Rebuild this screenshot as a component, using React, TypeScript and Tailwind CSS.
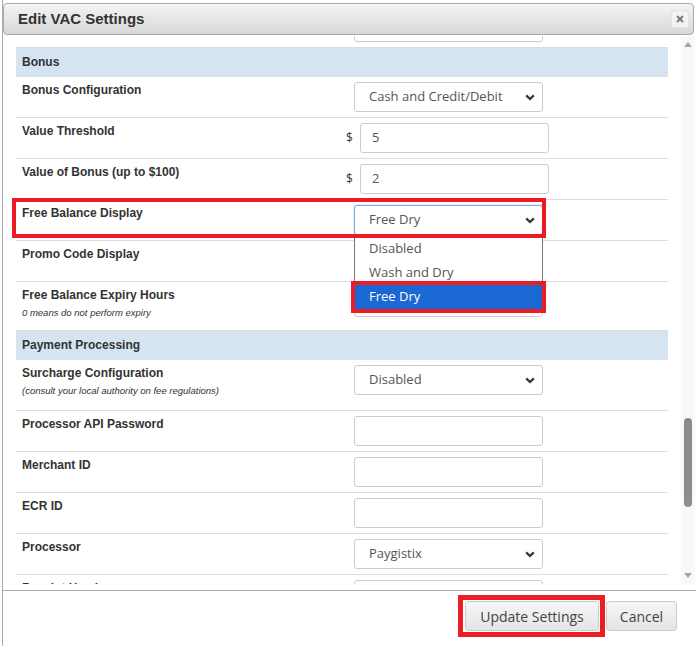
import { X } from 'lucide-react';

const LABEL_FONT = { fontFamily: '"Liberation Sans", Arial, sans-serif' };

function Chevron() {
  return (
    <svg width="10" height="7" viewBox="0 0 10 7" className="shrink-0">
      <path d="M1.2 1.4 L5 5 L8.8 1.4" fill="none" stroke="#333" strokeWidth="2.2" />
    </svg>
  );
}

function FakeSelect({ value, focused }: { value: string; focused?: boolean }) {
  return (
    <div
      className={
        'w-[189px] h-[30px] rounded-[3px] border bg-white flex items-center justify-between pl-[14px] pr-[7px] text-[13px] text-[#555] ' +
        (focused ? 'border-[#7aaee0] shadow-[0_0_2px_#9cc3ea]' : 'border-[#ccc]')
      }
    >
      <span>{value}</span>
      <Chevron />
    </div>
  );
}

function TextBox({ value = '' }: { value?: string }) {
  return (
    <div className="w-[189px] h-[30px] rounded-[3px] border border-[#ccc] bg-white flex items-center pl-[11px] text-[13px] text-[#555]">
      {value}
    </div>
  );
}

function Row({
  label,
  note,
  h = 'h-[41px]',
  children,
}: {
  label: string;
  note?: string;
  h?: string;
  children?: React.ReactNode;
}) {
  return (
    <div className={`relative flex ${h} border-b border-[#ddd] shrink-0`}>
      <div className="w-[330px] pl-[6px] pt-[5px]" style={LABEL_FONT}>
        <div className="text-[12px] font-bold text-[#333] leading-[16px]">{label}</div>
        {note && <div className="text-[9.5px] italic text-[#333] mt-[4px] leading-[12px]">{note}</div>}
      </div>
      <div className="flex-1 pt-[5px]">{children}</div>
    </div>
  );
}

function Section({ title }: { title: string }) {
  return (
    <div
      className="h-[29px] bg-[#d6e3f0] pl-[6px] pb-[1px] flex items-center text-[12px] font-bold text-[#333] shrink-0"
      style={LABEL_FONT}
    >
      {title}
    </div>
  );
}

function Dollar({ value }: { value: string }) {
  return (
    <div className="flex items-center">
      <span className="w-[14px] text-[12px] text-[#333]">$</span>
      <TextBox value={value} />
    </div>
  );
}

function Field({ children }: { children: React.ReactNode }) {
  return <div className="pl-[8px]">{children}</div>;
}

export default function App() {
  return (
    <div className="w-[696px] h-[646px] bg-white overflow-hidden" style={{ fontFamily: '"Open Sans", sans-serif' }}>
      <div className="ml-[2px] h-full border-l border-[#aaa] flex flex-col pt-[3px]">
        {/* Title bar */}
        <div className="mr-[2px] h-[32px] shrink-0 rounded-[4px] border border-[#aaa] bg-gradient-to-b from-[#f4f4f4] to-[#d8d8d8] flex items-center justify-between pl-[14px] pr-[4px]">
          <span className="text-[15px] font-bold text-[#333]" style={LABEL_FONT}>
            Edit VAC Settings
          </span>
          <div className="w-[18px] h-[18px] rounded-[3px] bg-[#f3f3f3] border border-[#e2e2e2] flex items-center justify-center">
            <X size={10} strokeWidth={4.5} color="#7a7a7a" />
          </div>
        </div>

        {/* Scrollable body */}
        <div className="flex-1 flex min-h-0 mt-[1px] mb-[6px]">
          <div className="flex-1 overflow-hidden pl-[13px] pr-[13px]">
            <div className="w-[652px] flex flex-col -mt-[29px]">
              <Row label="">
                <Field>
                  <TextBox />
                </Field>
              </Row>
              <Section title="Bonus" />
              <Row label="Bonus Configuration">
                <Field>
                  <FakeSelect value="Cash and Credit/Debit" />
                </Field>
              </Row>
              <Row label="Value Threshold">
                <Dollar value="5" />
              </Row>
              <Row label="Value of Bonus (up to $100)">
                <Dollar value="2" />
              </Row>
              <Row label="Free Balance Display">
                <div className="pl-[8px] relative">
                  <FakeSelect value="Free Dry" focused />
                  {/* open dropdown list */}
                  <div className="absolute left-[8px] top-[30px] w-[189px] z-10 bg-white border border-[#767676] text-[13px] text-[#555] py-[1px]">
                    <div className="h-[24px] pl-[14px] flex items-center">Disabled</div>
                    <div className="h-[24px] pl-[14px] flex items-center">Wash and Dry</div>
                    <div className="relative h-[24px] pl-[14px] flex items-center bg-[#1a68d3] text-white">
                      Free Dry
                      <div className="absolute -left-[4px] -right-[4px] -top-[4px] -bottom-[4px] border-4 border-[#ed1c24]" />
                    </div>
                  </div>
                </div>
                <div className="absolute left-[-4px] top-[-2px] w-[534px] h-[40px] border-4 border-[#ed1c24] z-20 pointer-events-none" />
              </Row>
              <Row label="Promo Code Display">
                <Field>
                  <FakeSelect value="Disabled" />
                </Field>
              </Row>
              <Row label="Free Balance Expiry Hours" note="0 means do not perform expiry" h="h-[49px]">
                <Field>
                  <TextBox value="0" />
                </Field>
              </Row>
              <Section title="Payment Processing" />
              <Row
                label="Surcharge Configuration"
                note="(consult your local authority on fee regulations)"
                h="h-[51px]"
              >
                <Field>
                  <FakeSelect value="Disabled" />
                </Field>
              </Row>
              <Row label="Processor API Password">
                <Field>
                  <TextBox />
                </Field>
              </Row>
              <Row label="Merchant ID">
                <Field>
                  <TextBox />
                </Field>
              </Row>
              <Row label="ECR ID">
                <Field>
                  <TextBox />
                </Field>
              </Row>
              <Row label="Processor">
                <Field>
                  <FakeSelect value="Paygistix" />
                </Field>
              </Row>
              <Row label="Receipt Header">
                <Field>
                  <TextBox />
                </Field>
              </Row>
            </div>
          </div>

          {/* Scrollbar */}
          <div className="w-[14px] mr-[1px] bg-[#f8f8f8] flex flex-col items-center pt-[6px] pb-[6px]">
            <svg width="8" height="5" viewBox="0 0 8 5" className="shrink-0">
              <path d="M0 5 L4 0 L8 5 Z" fill="#a3a3a3" />
            </svg>
            <div className="mt-[371px] w-[8px] h-[89px] rounded-full bg-[#8c8c8c] shrink-0" />
            <div className="flex-1" />
            <svg width="8" height="5" viewBox="0 0 8 5" className="shrink-0">
              <path d="M0 0 L8 0 L4 5 Z" fill="#a3a3a3" />
            </svg>
          </div>
        </div>

        {/* Footer */}
        <div className="h-[56px] shrink-0 border-t border-[#aaa] flex items-start justify-end pt-[10px] pr-[19px] gap-[7px]">
          <div className="relative">
            <button className="w-[134px] h-[30px] rounded-[3px] border border-[#ccc] bg-gradient-to-b from-[#f6f6f6] to-[#e5e5e5] text-[14px] text-[#444]">
              Update Settings
            </button>
            <div className="absolute -left-[7px] -right-[6px] -top-[6px] -bottom-[6px] border-[5px] border-[#ed1c24] pointer-events-none" />
          </div>
          <button className="w-[71px] h-[30px] rounded-[3px] border border-[#ccc] bg-gradient-to-b from-[#f6f6f6] to-[#e5e5e5] text-[14px] text-[#444]">
            Cancel
          </button>
        </div>
      </div>
    </div>
  );
}
